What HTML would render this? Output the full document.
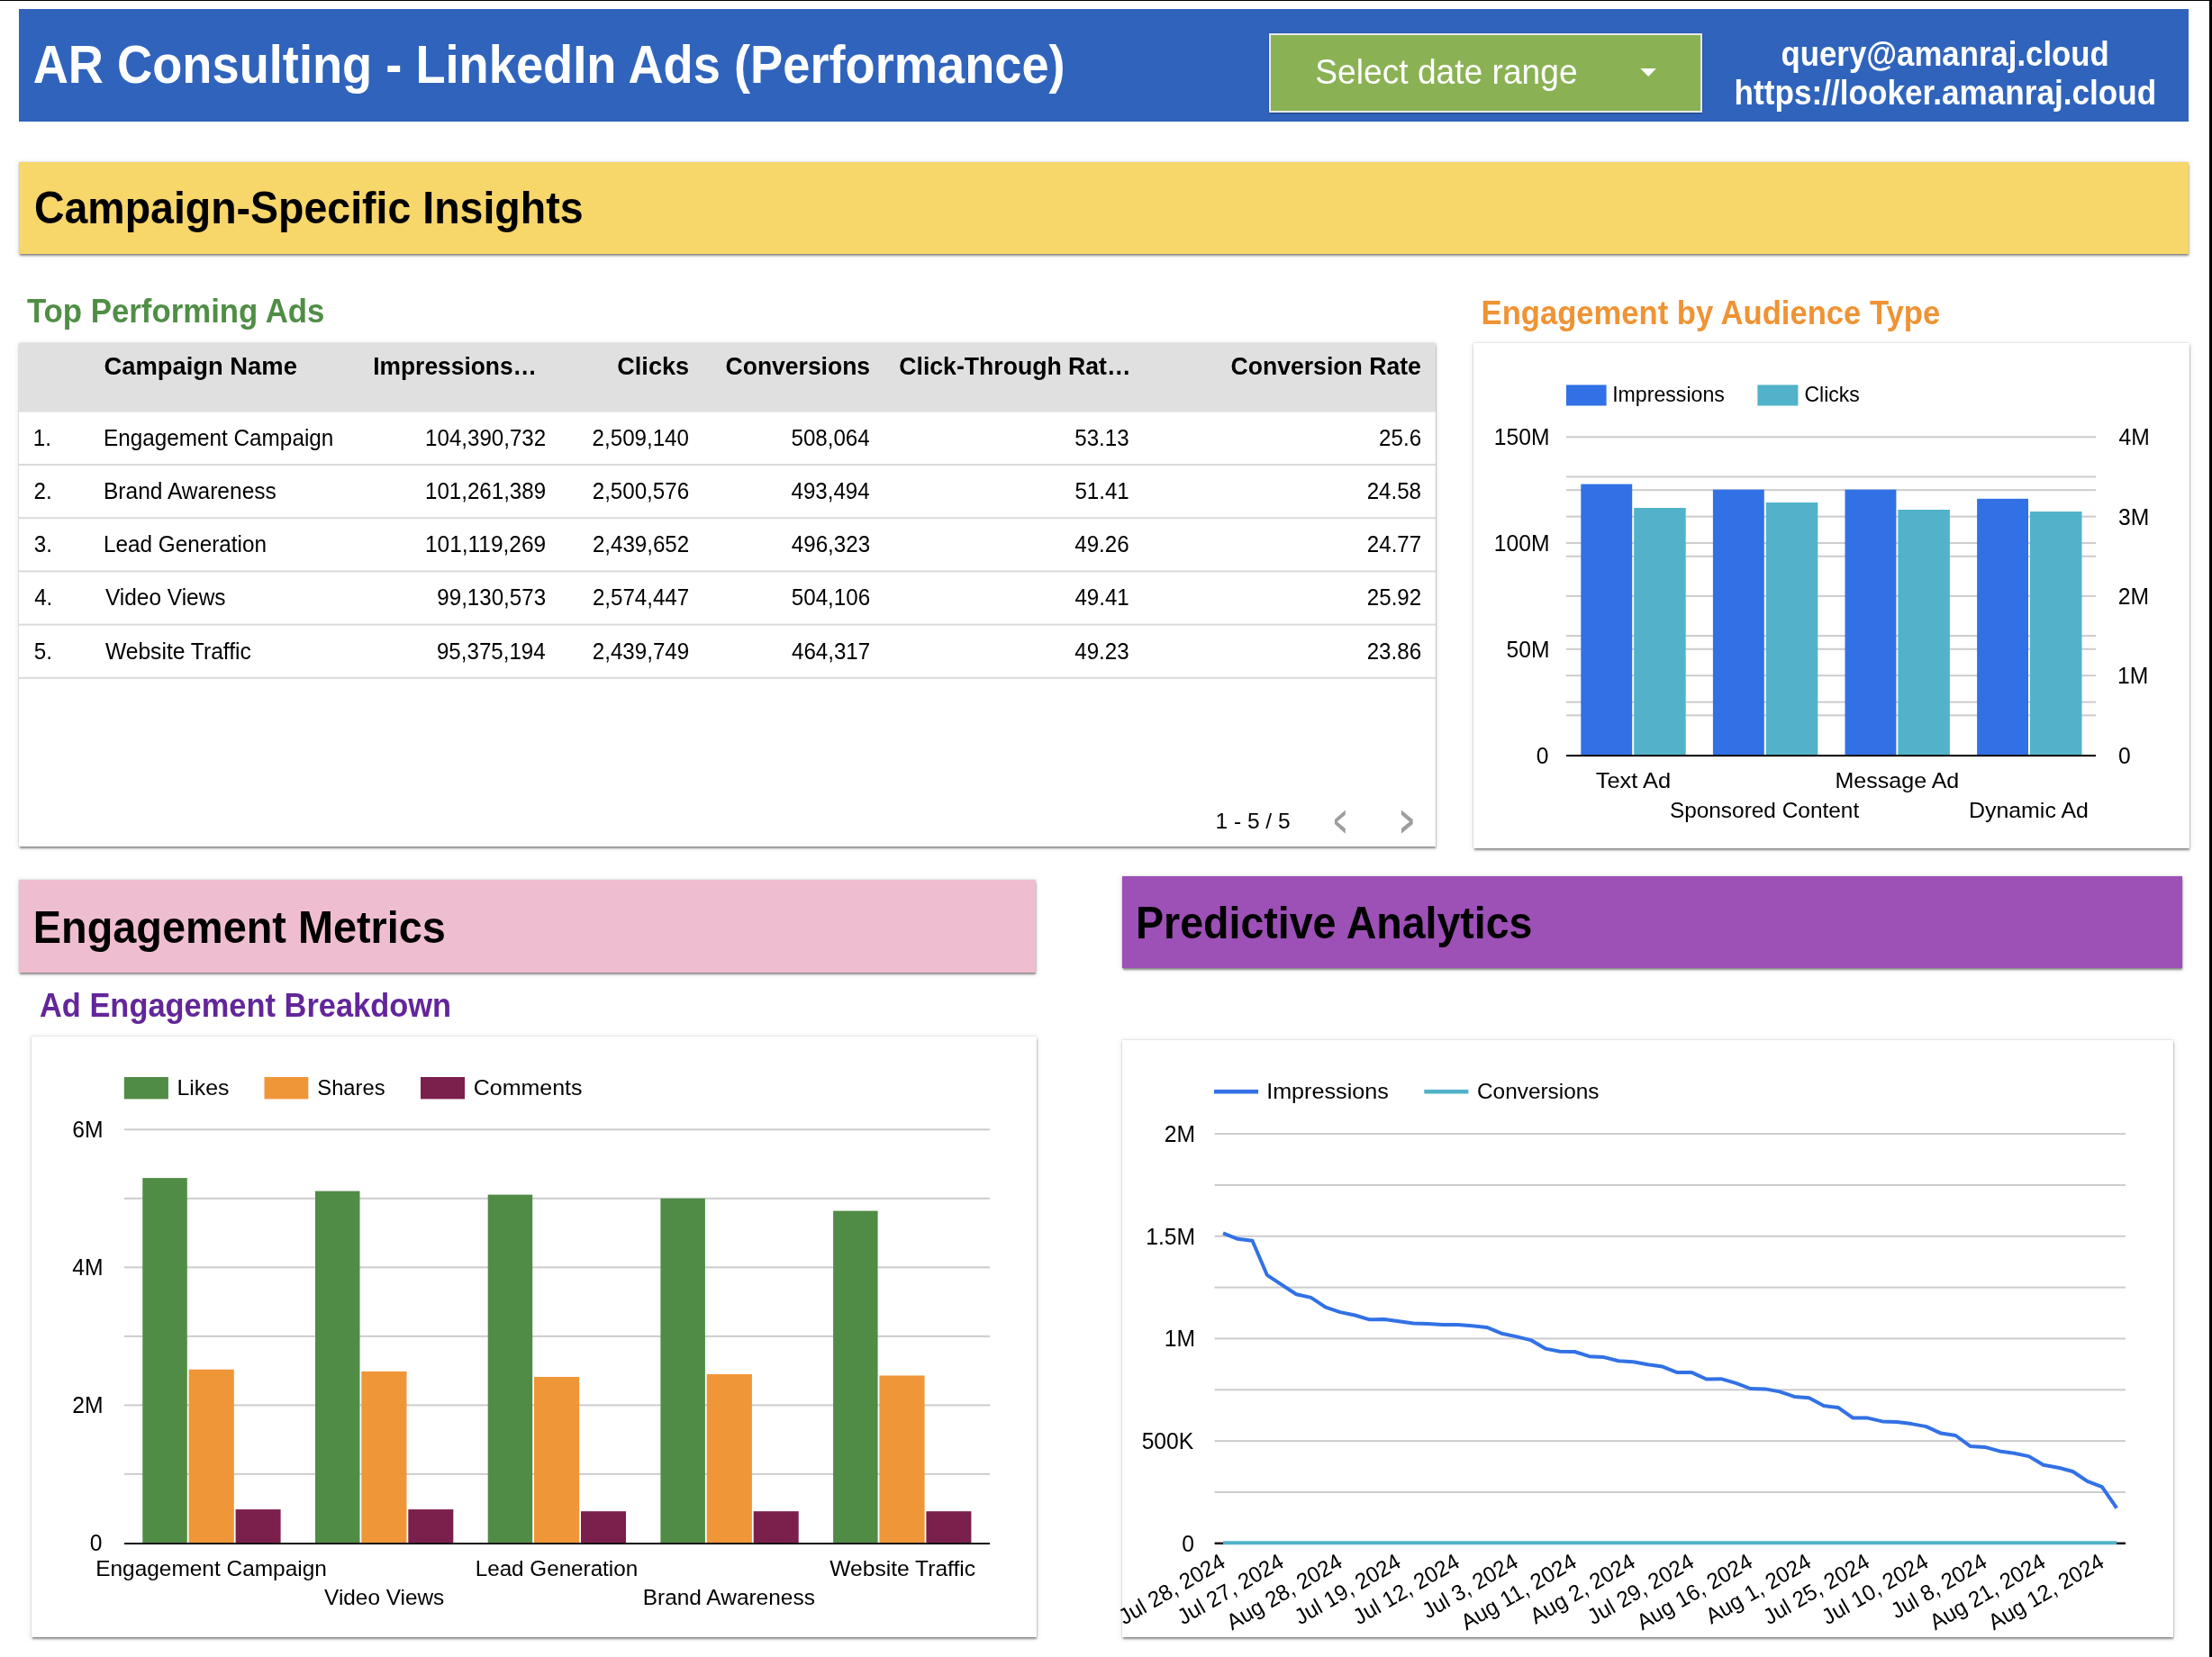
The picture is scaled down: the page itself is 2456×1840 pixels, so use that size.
<!DOCTYPE html>
<html><head><meta charset="utf-8"><title>AR Consulting - LinkedIn Ads (Performance)</title>
<style>
html,body{margin:0;padding:0;background:#fff;}
body{width:2456px;height:1840px;position:relative;overflow:hidden;font-family:"Liberation Sans",sans-serif;}
.b{position:absolute;box-sizing:border-box;}
.sh{box-shadow:0 2px 2px -0.5px rgba(0,0,0,.4),0 1px 6px 1px rgba(0,0,0,.09),0 0 1.5px rgba(0,0,0,.2);}
svg{position:absolute;left:0;top:0;will-change:transform;}
svg text{font-family:"Liberation Sans",sans-serif;}
</style></head><body>
<div class="b" style="left:0;top:0;width:2456px;height:1px;background:#000"></div>
<div class="b" style="left:2453px;top:0;width:3px;height:1840px;background:#000"></div>
<div class="b" style="left:21px;top:10px;width:2409px;height:125px;background:#3064bc"></div>
<div class="b" style="left:1409px;top:36.6px;width:481px;height:88.5px;background:#8ab254;border:2.2px solid #e9e9e9;box-shadow:0 1px 2px rgba(0,0,0,.35)"></div>
<div class="b sh" style="left:21px;top:179.6px;width:2409px;height:102.4px;background:#f7d66a"></div>
<div class="b sh" style="left:21px;top:381px;width:1573px;height:559px;background:#fff"></div>
<div class="b sh" style="left:1636px;top:381.3px;width:795px;height:560.5px;background:#fff"></div>
<div class="b sh" style="left:21px;top:977px;width:1129px;height:102.5px;background:#efbdd0"></div>
<div class="b sh" style="left:1246.3px;top:973.3px;width:1177px;height:102px;background:#9d50b6"></div>
<div class="b sh" style="left:35px;top:1150.5px;width:1116px;height:667.5px;background:#fff"></div>
<div class="b sh" style="left:1246px;top:1154.5px;width:1166.5px;height:663px;background:#fff"></div>
<svg width="2456" height="1840" viewBox="0 0 2456 1840">
<text x="36.65" y="92.20" font-size="59.59" font-weight="bold" fill="#fff" textLength="1146.04" lengthAdjust="spacingAndGlyphs">AR Consulting - LinkedIn Ads (Performance)</text>
<text x="1460.31" y="93.00" font-size="39.24" font-weight="normal" fill="#fff" textLength="291.34" lengthAdjust="spacingAndGlyphs">Select date range</text>
<text x="1977.57" y="72.50" font-size="38.52" font-weight="bold" fill="#fff" textLength="364.22" lengthAdjust="spacingAndGlyphs">query@amanraj.cloud</text>
<text x="1925.56" y="115.70" font-size="38.52" font-weight="bold" fill="#fff" textLength="468.75" lengthAdjust="spacingAndGlyphs">https://looker.amanraj.cloud</text>
<path d="M1821.4 76 L1838.9 76 L1830.15 85 Z" fill="#fff"/>
<text x="37.89" y="247.70" font-size="50.44" font-weight="bold" fill="#000" textLength="609.61" lengthAdjust="spacingAndGlyphs">Campaign-Specific Insights</text>
<text x="36.87" y="1046.80" font-size="50.87" font-weight="bold" fill="#000" textLength="458.05" lengthAdjust="spacingAndGlyphs">Engagement Metrics</text>
<text x="1261.10" y="1042.20" font-size="50.87" font-weight="bold" fill="#000" textLength="440.40" lengthAdjust="spacingAndGlyphs">Predictive Analytics</text>
<text x="29.91" y="358.00" font-size="37.79" font-weight="bold" fill="#508e46" textLength="330.50" lengthAdjust="spacingAndGlyphs">Top Performing Ads</text>
<text x="1644.60" y="360.00" font-size="37.79" font-weight="bold" fill="#ef9334" textLength="509.57" lengthAdjust="spacingAndGlyphs">Engagement by Audience Type</text>
<text x="43.94" y="1128.70" font-size="37.79" font-weight="bold" fill="#63269a" textLength="457.19" lengthAdjust="spacingAndGlyphs">Ad Engagement Breakdown</text>
<rect x="21.00" y="381.00" width="1573.00" height="76.60" fill="#e0e0e0"/>
<text x="115.38" y="415.70" font-size="28.34" font-weight="bold" fill="#000" textLength="214.56" lengthAdjust="spacingAndGlyphs">Campaign Name</text>
<text x="414.24" y="415.70" font-size="28.34" font-weight="bold" fill="#000" textLength="181.75" lengthAdjust="spacingAndGlyphs">Impressions…</text>
<text x="685.29" y="415.70" font-size="28.34" font-weight="bold" fill="#000" textLength="79.82" lengthAdjust="spacingAndGlyphs">Clicks</text>
<text x="805.61" y="415.70" font-size="28.34" font-weight="bold" fill="#000" textLength="160.47" lengthAdjust="spacingAndGlyphs">Conversions</text>
<text x="998.31" y="415.70" font-size="28.34" font-weight="bold" fill="#000" textLength="257.31" lengthAdjust="spacingAndGlyphs">Click-Through Rat…</text>
<text x="1366.41" y="415.70" font-size="28.34" font-weight="bold" fill="#000" textLength="211.50" lengthAdjust="spacingAndGlyphs">Conversion Rate</text>
<text x="36.85" y="494.70" font-size="25.00" font-weight="normal" fill="#000" textLength="20.22" lengthAdjust="spacingAndGlyphs">1.</text>
<text x="115.01" y="494.70" font-size="25.00" font-weight="normal" fill="#000" textLength="255.32" lengthAdjust="spacingAndGlyphs">Engagement Campaign</text>
<text x="472.05" y="494.70" font-size="25.00" font-weight="normal" fill="#000" textLength="134.16" lengthAdjust="spacingAndGlyphs">104,390,732</text>
<text x="657.61" y="494.70" font-size="25.00" font-weight="normal" fill="#000" textLength="107.33" lengthAdjust="spacingAndGlyphs">2,509,140</text>
<text x="878.50" y="494.70" font-size="25.00" font-weight="normal" fill="#000" textLength="87.21" lengthAdjust="spacingAndGlyphs">508,064</text>
<text x="1193.29" y="494.70" font-size="25.00" font-weight="normal" fill="#000" textLength="60.37" lengthAdjust="spacingAndGlyphs">53.13</text>
<text x="1531.11" y="494.70" font-size="25.00" font-weight="normal" fill="#000" textLength="46.96" lengthAdjust="spacingAndGlyphs">25.6</text>
<rect x="21.00" y="515.00" width="1573.00" height="2.00" fill="#d9dbdb"/>
<text x="37.48" y="553.90" font-size="25.00" font-weight="normal" fill="#000" textLength="20.22" lengthAdjust="spacingAndGlyphs">2.</text>
<text x="115.01" y="553.90" font-size="25.00" font-weight="normal" fill="#000" textLength="191.80" lengthAdjust="spacingAndGlyphs">Brand Awareness</text>
<text x="471.98" y="553.90" font-size="25.00" font-weight="normal" fill="#000" textLength="134.16" lengthAdjust="spacingAndGlyphs">101,261,389</text>
<text x="657.73" y="553.90" font-size="25.00" font-weight="normal" fill="#000" textLength="107.33" lengthAdjust="spacingAndGlyphs">2,500,576</text>
<text x="878.50" y="553.90" font-size="25.00" font-weight="normal" fill="#000" textLength="87.21" lengthAdjust="spacingAndGlyphs">493,494</text>
<text x="1193.41" y="553.90" font-size="25.00" font-weight="normal" fill="#000" textLength="60.37" lengthAdjust="spacingAndGlyphs">51.41</text>
<text x="1517.68" y="553.90" font-size="25.00" font-weight="normal" fill="#000" textLength="60.37" lengthAdjust="spacingAndGlyphs">24.58</text>
<rect x="21.00" y="574.20" width="1573.00" height="2.00" fill="#d9dbdb"/>
<text x="37.78" y="613.10" font-size="25.00" font-weight="normal" fill="#000" textLength="20.22" lengthAdjust="spacingAndGlyphs">3.</text>
<text x="115.01" y="613.10" font-size="25.00" font-weight="normal" fill="#000" textLength="181.04" lengthAdjust="spacingAndGlyphs">Lead Generation</text>
<text x="471.98" y="613.10" font-size="25.00" font-weight="normal" fill="#000" textLength="134.16" lengthAdjust="spacingAndGlyphs">101,119,269</text>
<text x="657.89" y="613.10" font-size="25.00" font-weight="normal" fill="#000" textLength="107.33" lengthAdjust="spacingAndGlyphs">2,439,652</text>
<text x="878.85" y="613.10" font-size="25.00" font-weight="normal" fill="#000" textLength="87.21" lengthAdjust="spacingAndGlyphs">496,323</text>
<text x="1193.29" y="613.10" font-size="25.00" font-weight="normal" fill="#000" textLength="60.37" lengthAdjust="spacingAndGlyphs">49.26</text>
<text x="1517.84" y="613.10" font-size="25.00" font-weight="normal" fill="#000" textLength="60.37" lengthAdjust="spacingAndGlyphs">24.77</text>
<rect x="21.00" y="633.40" width="1573.00" height="2.00" fill="#d9dbdb"/>
<text x="38.14" y="672.30" font-size="25.00" font-weight="normal" fill="#000" textLength="20.22" lengthAdjust="spacingAndGlyphs">4.</text>
<text x="116.89" y="672.30" font-size="25.00" font-weight="normal" fill="#000" textLength="133.72" lengthAdjust="spacingAndGlyphs">Video Views</text>
<text x="485.32" y="672.30" font-size="25.00" font-weight="normal" fill="#000" textLength="120.74" lengthAdjust="spacingAndGlyphs">99,130,573</text>
<text x="657.89" y="672.30" font-size="25.00" font-weight="normal" fill="#000" textLength="107.33" lengthAdjust="spacingAndGlyphs">2,574,447</text>
<text x="878.85" y="672.30" font-size="25.00" font-weight="normal" fill="#000" textLength="87.21" lengthAdjust="spacingAndGlyphs">504,106</text>
<text x="1193.41" y="672.30" font-size="25.00" font-weight="normal" fill="#000" textLength="60.37" lengthAdjust="spacingAndGlyphs">49.41</text>
<text x="1517.84" y="672.30" font-size="25.00" font-weight="normal" fill="#000" textLength="60.37" lengthAdjust="spacingAndGlyphs">25.92</text>
<rect x="21.00" y="692.60" width="1573.00" height="2.00" fill="#d9dbdb"/>
<text x="37.73" y="731.50" font-size="25.00" font-weight="normal" fill="#000" textLength="20.22" lengthAdjust="spacingAndGlyphs">5.</text>
<text x="116.89" y="731.50" font-size="25.00" font-weight="normal" fill="#000" textLength="162.03" lengthAdjust="spacingAndGlyphs">Website Traffic</text>
<text x="484.96" y="731.50" font-size="25.00" font-weight="normal" fill="#000" textLength="120.74" lengthAdjust="spacingAndGlyphs">95,375,194</text>
<text x="657.82" y="731.50" font-size="25.00" font-weight="normal" fill="#000" textLength="107.33" lengthAdjust="spacingAndGlyphs">2,439,749</text>
<text x="879.01" y="731.50" font-size="25.00" font-weight="normal" fill="#000" textLength="87.21" lengthAdjust="spacingAndGlyphs">464,317</text>
<text x="1193.29" y="731.50" font-size="25.00" font-weight="normal" fill="#000" textLength="60.37" lengthAdjust="spacingAndGlyphs">49.23</text>
<text x="1517.69" y="731.50" font-size="25.00" font-weight="normal" fill="#000" textLength="60.37" lengthAdjust="spacingAndGlyphs">23.86</text>
<rect x="21.00" y="751.80" width="1573.00" height="2.00" fill="#d9dbdb"/>
<text x="1349.53" y="919.60" font-size="24.71" font-weight="normal" fill="#000" textLength="83.10" lengthAdjust="spacingAndGlyphs">1 - 5 / 5</text>
<path d="M1493.8 899.4 L1481.9 910.1 L1481.9 914.9 L1493.8 925.8 L1493.8 920.1 L1484.7 912.5 L1493.8 904.7 Z" fill="#9e9e9e"/>
<path d="M1555.9 899.4 L1568.7 910.1 L1568.7 914.9 L1555.9 925.8 L1555.9 920.1 L1565 912.5 L1555.9 904.7 Z" fill="#9e9e9e"/>
<rect x="1739.00" y="427.40" width="44.60" height="23.10" fill="#3271e5"/>
<text x="1790.17" y="446.00" font-size="24.71" font-weight="normal" fill="#000" textLength="124.67" lengthAdjust="spacingAndGlyphs">Impressions</text>
<rect x="1951.40" y="427.40" width="45.00" height="23.10" fill="#52b2c9"/>
<text x="2003.53" y="446.00" font-size="24.71" font-weight="normal" fill="#000" textLength="61.30" lengthAdjust="spacingAndGlyphs">Clicks</text>
<rect x="1739.00" y="484.30" width="588.00" height="2.00" fill="#cccccc"/>
<rect x="1739.00" y="528.45" width="588.00" height="2.00" fill="#cccccc"/>
<rect x="1739.00" y="543.17" width="588.00" height="2.00" fill="#cccccc"/>
<rect x="1739.00" y="572.60" width="588.00" height="2.00" fill="#cccccc"/>
<rect x="1739.00" y="602.03" width="588.00" height="2.00" fill="#cccccc"/>
<rect x="1739.00" y="616.75" width="588.00" height="2.00" fill="#cccccc"/>
<rect x="1739.00" y="660.90" width="588.00" height="2.00" fill="#cccccc"/>
<rect x="1739.00" y="705.05" width="588.00" height="2.00" fill="#cccccc"/>
<rect x="1739.00" y="719.77" width="588.00" height="2.00" fill="#cccccc"/>
<rect x="1739.00" y="749.20" width="588.00" height="2.00" fill="#cccccc"/>
<rect x="1739.00" y="778.63" width="588.00" height="2.00" fill="#cccccc"/>
<rect x="1739.00" y="793.35" width="588.00" height="2.00" fill="#cccccc"/>
<rect x="1755.30" y="537.57" width="56.90" height="300.93" fill="#3271e5"/>
<rect x="1814.20" y="563.98" width="57.50" height="274.52" fill="#52b2c9"/>
<rect x="1901.90" y="543.70" width="56.90" height="294.80" fill="#3271e5"/>
<rect x="1960.80" y="557.97" width="57.50" height="280.53" fill="#52b2c9"/>
<rect x="2048.50" y="543.70" width="56.90" height="294.80" fill="#3271e5"/>
<rect x="2107.40" y="566.01" width="57.50" height="272.49" fill="#52b2c9"/>
<rect x="2195.10" y="553.82" width="56.90" height="284.68" fill="#3271e5"/>
<rect x="2254.00" y="568.04" width="57.50" height="270.46" fill="#52b2c9"/>
<rect x="1739.00" y="838.10" width="588.00" height="2.00" fill="#000"/>
<text x="1658.80" y="494.30" font-size="25.44" font-weight="normal" fill="#000" textLength="61.72" lengthAdjust="spacingAndGlyphs">150M</text>
<text x="1658.80" y="612.03" font-size="25.44" font-weight="normal" fill="#000" textLength="61.72" lengthAdjust="spacingAndGlyphs">100M</text>
<text x="1672.53" y="729.77" font-size="25.44" font-weight="normal" fill="#000" textLength="48.00" lengthAdjust="spacingAndGlyphs">50M</text>
<text x="1705.74" y="847.50" font-size="25.44" font-weight="normal" fill="#000" textLength="13.72" lengthAdjust="spacingAndGlyphs">0</text>
<text x="2352.43" y="494.30" font-size="25.44" font-weight="normal" fill="#000" textLength="34.28" lengthAdjust="spacingAndGlyphs">4M</text>
<text x="2352.06" y="582.60" font-size="25.44" font-weight="normal" fill="#000" textLength="34.28" lengthAdjust="spacingAndGlyphs">3M</text>
<text x="2351.76" y="670.90" font-size="25.44" font-weight="normal" fill="#000" textLength="34.28" lengthAdjust="spacingAndGlyphs">2M</text>
<text x="2351.12" y="759.20" font-size="25.44" font-weight="normal" fill="#000" textLength="34.28" lengthAdjust="spacingAndGlyphs">1M</text>
<text x="2352.04" y="847.50" font-size="25.44" font-weight="normal" fill="#000" textLength="13.72" lengthAdjust="spacingAndGlyphs">0</text>
<text x="1771.76" y="874.80" font-size="24.71" font-weight="normal" fill="#000" textLength="83.40" lengthAdjust="spacingAndGlyphs">Text Ad</text>
<text x="2037.47" y="874.80" font-size="24.71" font-weight="normal" fill="#000" textLength="137.83" lengthAdjust="spacingAndGlyphs">Message Ad</text>
<text x="1853.89" y="907.70" font-size="24.71" font-weight="normal" fill="#000" textLength="210.29" lengthAdjust="spacingAndGlyphs">Sponsored Content</text>
<text x="2185.98" y="907.70" font-size="24.71" font-weight="normal" fill="#000" textLength="132.91" lengthAdjust="spacingAndGlyphs">Dynamic Ad</text>
<rect x="137.80" y="1196.00" width="49.10" height="24.40" fill="#508c45"/>
<text x="196.46" y="1216.30" font-size="24.71" font-weight="normal" fill="#000" textLength="58.04" lengthAdjust="spacingAndGlyphs">Likes</text>
<rect x="293.50" y="1196.00" width="48.80" height="24.40" fill="#ef9638"/>
<text x="352.32" y="1216.30" font-size="24.71" font-weight="normal" fill="#000" textLength="75.24" lengthAdjust="spacingAndGlyphs">Shares</text>
<rect x="467.00" y="1196.00" width="49.00" height="24.40" fill="#7b1f4c"/>
<text x="525.73" y="1216.30" font-size="24.71" font-weight="normal" fill="#000" textLength="120.77" lengthAdjust="spacingAndGlyphs">Comments</text>
<rect x="138.00" y="1253.30" width="961.00" height="2.00" fill="#cccccc"/>
<rect x="138.00" y="1329.82" width="961.00" height="2.00" fill="#cccccc"/>
<rect x="138.00" y="1406.33" width="961.00" height="2.00" fill="#cccccc"/>
<rect x="138.00" y="1482.85" width="961.00" height="2.00" fill="#cccccc"/>
<rect x="138.00" y="1559.37" width="961.00" height="2.00" fill="#cccccc"/>
<rect x="138.00" y="1635.88" width="961.00" height="2.00" fill="#cccccc"/>
<rect x="158.30" y="1308.09" width="49.50" height="405.31" fill="#508c45"/>
<rect x="209.60" y="1520.73" width="50.20" height="192.67" fill="#ef9638"/>
<rect x="261.60" y="1676.09" width="50.00" height="37.31" fill="#7b1f4c"/>
<rect x="350.00" y="1322.63" width="49.50" height="390.77" fill="#508c45"/>
<rect x="401.30" y="1522.87" width="50.20" height="190.53" fill="#ef9638"/>
<rect x="453.30" y="1676.09" width="50.00" height="37.31" fill="#7b1f4c"/>
<rect x="541.70" y="1326.61" width="49.50" height="386.79" fill="#508c45"/>
<rect x="593.00" y="1528.99" width="50.20" height="184.41" fill="#ef9638"/>
<rect x="645.00" y="1678.20" width="50.00" height="35.20" fill="#7b1f4c"/>
<rect x="733.40" y="1330.82" width="49.50" height="382.58" fill="#508c45"/>
<rect x="784.70" y="1525.93" width="50.20" height="187.47" fill="#ef9638"/>
<rect x="836.70" y="1678.20" width="50.00" height="35.20" fill="#7b1f4c"/>
<rect x="925.10" y="1344.59" width="49.50" height="368.81" fill="#508c45"/>
<rect x="976.40" y="1527.46" width="50.20" height="185.94" fill="#ef9638"/>
<rect x="1028.40" y="1678.20" width="50.00" height="35.20" fill="#7b1f4c"/>
<rect x="138.00" y="1713.10" width="961.00" height="1.90" fill="#000"/>
<text x="80.35" y="1263.30" font-size="25.44" font-weight="normal" fill="#000" textLength="34.28" lengthAdjust="spacingAndGlyphs">6M</text>
<text x="80.35" y="1416.33" font-size="25.44" font-weight="normal" fill="#000" textLength="34.28" lengthAdjust="spacingAndGlyphs">4M</text>
<text x="80.35" y="1569.37" font-size="25.44" font-weight="normal" fill="#000" textLength="34.28" lengthAdjust="spacingAndGlyphs">2M</text>
<text x="99.84" y="1722.40" font-size="25.44" font-weight="normal" fill="#000" textLength="13.72" lengthAdjust="spacingAndGlyphs">0</text>
<text x="106.20" y="1750.30" font-size="24.71" font-weight="normal" fill="#000" textLength="256.69" lengthAdjust="spacingAndGlyphs">Engagement Campaign</text>
<text x="527.71" y="1750.30" font-size="24.71" font-weight="normal" fill="#000" textLength="180.46" lengthAdjust="spacingAndGlyphs">Lead Generation</text>
<text x="921.29" y="1750.30" font-size="24.71" font-weight="normal" fill="#000" textLength="161.85" lengthAdjust="spacingAndGlyphs">Website Traffic</text>
<text x="360.09" y="1782.20" font-size="24.71" font-weight="normal" fill="#000" textLength="133.18" lengthAdjust="spacingAndGlyphs">Video Views</text>
<text x="713.71" y="1782.20" font-size="24.71" font-weight="normal" fill="#000" textLength="191.16" lengthAdjust="spacingAndGlyphs">Brand Awareness</text>
<rect x="1348.00" y="1209.90" width="49.10" height="4.60" fill="#3271e5"/>
<text x="1406.18" y="1220.40" font-size="24.71" font-weight="normal" fill="#000" textLength="135.63" lengthAdjust="spacingAndGlyphs">Impressions</text>
<rect x="1581.30" y="1209.90" width="49.10" height="4.60" fill="#52b2c9"/>
<text x="1639.96" y="1220.40" font-size="24.71" font-weight="normal" fill="#000" textLength="135.62" lengthAdjust="spacingAndGlyphs">Conversions</text>
<rect x="1348.60" y="1258.10" width="1011.40" height="2.00" fill="#cccccc"/>
<rect x="1348.60" y="1314.94" width="1011.40" height="2.00" fill="#cccccc"/>
<rect x="1348.60" y="1371.77" width="1011.40" height="2.00" fill="#cccccc"/>
<rect x="1348.60" y="1428.61" width="1011.40" height="2.00" fill="#cccccc"/>
<rect x="1348.60" y="1485.45" width="1011.40" height="2.00" fill="#cccccc"/>
<rect x="1348.60" y="1542.29" width="1011.40" height="2.00" fill="#cccccc"/>
<rect x="1348.60" y="1599.12" width="1011.40" height="2.00" fill="#cccccc"/>
<rect x="1348.60" y="1655.96" width="1011.40" height="2.00" fill="#cccccc"/>
<rect x="1348.60" y="1712.60" width="1011.40" height="2.40" fill="#000"/>
<text x="1292.75" y="1268.10" font-size="25.44" font-weight="normal" fill="#000" textLength="34.28" lengthAdjust="spacingAndGlyphs">2M</text>
<text x="1272.17" y="1381.77" font-size="25.44" font-weight="normal" fill="#000" textLength="54.85" lengthAdjust="spacingAndGlyphs">1.5M</text>
<text x="1292.75" y="1495.45" font-size="25.44" font-weight="normal" fill="#000" textLength="34.28" lengthAdjust="spacingAndGlyphs">1M</text>
<text x="1267.65" y="1609.12" font-size="25.44" font-weight="normal" fill="#000" textLength="57.62" lengthAdjust="spacingAndGlyphs">500K</text>
<text x="1312.24" y="1722.80" font-size="25.44" font-weight="normal" fill="#000" textLength="13.72" lengthAdjust="spacingAndGlyphs">0</text>
<path d="M1358.00 1369.40 L1374.27 1375.80 L1390.53 1377.80 L1406.80 1415.80 L1423.06 1426.60 L1439.33 1437.20 L1455.59 1440.90 L1471.86 1451.70 L1488.12 1457.10 L1504.39 1460.50 L1520.66 1465.30 L1536.92 1465.00 L1553.19 1467.30 L1569.45 1469.60 L1585.72 1470.00 L1601.98 1471.10 L1618.25 1470.90 L1634.51 1472.30 L1650.78 1473.90 L1667.05 1480.70 L1683.31 1484.10 L1699.58 1488.10 L1715.84 1497.60 L1732.11 1500.80 L1748.37 1501.00 L1764.64 1506.20 L1780.90 1507.10 L1797.17 1511.20 L1813.44 1512.30 L1829.70 1515.30 L1845.97 1517.60 L1862.23 1524.10 L1878.50 1524.10 L1894.76 1531.50 L1911.03 1531.20 L1927.30 1535.90 L1943.56 1542.00 L1959.83 1542.40 L1976.09 1545.40 L1992.36 1550.90 L2008.62 1552.20 L2024.89 1561.00 L2041.15 1563.10 L2057.42 1574.60 L2073.69 1574.60 L2089.95 1578.40 L2106.22 1578.90 L2122.48 1581.10 L2138.75 1584.10 L2155.01 1591.60 L2171.28 1594.00 L2187.54 1605.90 L2203.81 1606.90 L2220.08 1611.40 L2236.34 1613.70 L2252.61 1617.10 L2268.87 1626.70 L2285.14 1629.70 L2301.40 1634.00 L2317.67 1644.90 L2333.93 1651.10 L2350.20 1674.70" fill="none" stroke="#3271e5" stroke-width="4" stroke-linejoin="round"/>
<path d="M1358.00 1713.20 L1374.27 1713.20 L1390.53 1713.20 L1406.80 1713.20 L1423.06 1713.20 L1439.33 1713.20 L1455.59 1713.20 L1471.86 1713.20 L1488.12 1713.20 L1504.39 1713.20 L1520.66 1713.20 L1536.92 1713.20 L1553.19 1713.20 L1569.45 1713.20 L1585.72 1713.20 L1601.98 1713.20 L1618.25 1713.20 L1634.51 1713.20 L1650.78 1713.20 L1667.05 1713.20 L1683.31 1713.20 L1699.58 1713.20 L1715.84 1713.20 L1732.11 1713.20 L1748.37 1713.20 L1764.64 1713.20 L1780.90 1713.20 L1797.17 1713.20 L1813.44 1713.20 L1829.70 1713.20 L1845.97 1713.20 L1862.23 1713.20 L1878.50 1713.20 L1894.76 1713.20 L1911.03 1713.20 L1927.30 1713.20 L1943.56 1713.20 L1959.83 1713.20 L1976.09 1713.20 L1992.36 1713.20 L2008.62 1713.20 L2024.89 1713.20 L2041.15 1713.20 L2057.42 1713.20 L2073.69 1713.20 L2089.95 1713.20 L2106.22 1713.20 L2122.48 1713.20 L2138.75 1713.20 L2155.01 1713.20 L2171.28 1713.20 L2187.54 1713.20 L2203.81 1713.20 L2220.08 1713.20 L2236.34 1713.20 L2252.61 1713.20 L2268.87 1713.20 L2285.14 1713.20 L2301.40 1713.20 L2317.67 1713.20 L2333.93 1713.20 L2350.20 1713.20" fill="none" stroke="#52b2c9" stroke-width="4" stroke-linejoin="round"/>
<g transform="translate(1362.00 1739.00) rotate(-30)"><text x="-131.27" y="0" font-size="24.71" fill="#000" textLength="131.27" lengthAdjust="spacingAndGlyphs">Jul 28, 2024</text></g>
<g transform="translate(1427.06 1739.00) rotate(-30)"><text x="-131.27" y="0" font-size="24.71" fill="#000" textLength="131.27" lengthAdjust="spacingAndGlyphs">Jul 27, 2024</text></g>
<g transform="translate(1492.12 1739.00) rotate(-30)"><text x="-143.34" y="0" font-size="24.71" fill="#000" textLength="143.34" lengthAdjust="spacingAndGlyphs">Aug 28, 2024</text></g>
<g transform="translate(1557.19 1739.00) rotate(-30)"><text x="-131.27" y="0" font-size="24.71" fill="#000" textLength="131.27" lengthAdjust="spacingAndGlyphs">Jul 19, 2024</text></g>
<g transform="translate(1622.25 1739.00) rotate(-30)"><text x="-131.27" y="0" font-size="24.71" fill="#000" textLength="131.27" lengthAdjust="spacingAndGlyphs">Jul 12, 2024</text></g>
<g transform="translate(1687.31 1739.00) rotate(-30)"><text x="-117.87" y="0" font-size="24.71" fill="#000" textLength="117.87" lengthAdjust="spacingAndGlyphs">Jul 3, 2024</text></g>
<g transform="translate(1752.37 1739.00) rotate(-30)"><text x="-143.34" y="0" font-size="24.71" fill="#000" textLength="143.34" lengthAdjust="spacingAndGlyphs">Aug 11, 2024</text></g>
<g transform="translate(1817.44 1739.00) rotate(-30)"><text x="-129.94" y="0" font-size="24.71" fill="#000" textLength="129.94" lengthAdjust="spacingAndGlyphs">Aug 2, 2024</text></g>
<g transform="translate(1882.50 1739.00) rotate(-30)"><text x="-131.27" y="0" font-size="24.71" fill="#000" textLength="131.27" lengthAdjust="spacingAndGlyphs">Jul 29, 2024</text></g>
<g transform="translate(1947.56 1739.00) rotate(-30)"><text x="-143.34" y="0" font-size="24.71" fill="#000" textLength="143.34" lengthAdjust="spacingAndGlyphs">Aug 16, 2024</text></g>
<g transform="translate(2012.62 1739.00) rotate(-30)"><text x="-129.94" y="0" font-size="24.71" fill="#000" textLength="129.94" lengthAdjust="spacingAndGlyphs">Aug 1, 2024</text></g>
<g transform="translate(2077.69 1739.00) rotate(-30)"><text x="-131.27" y="0" font-size="24.71" fill="#000" textLength="131.27" lengthAdjust="spacingAndGlyphs">Jul 25, 2024</text></g>
<g transform="translate(2142.75 1739.00) rotate(-30)"><text x="-131.27" y="0" font-size="24.71" fill="#000" textLength="131.27" lengthAdjust="spacingAndGlyphs">Jul 10, 2024</text></g>
<g transform="translate(2207.81 1739.00) rotate(-30)"><text x="-117.87" y="0" font-size="24.71" fill="#000" textLength="117.87" lengthAdjust="spacingAndGlyphs">Jul 8, 2024</text></g>
<g transform="translate(2272.87 1739.00) rotate(-30)"><text x="-143.34" y="0" font-size="24.71" fill="#000" textLength="143.34" lengthAdjust="spacingAndGlyphs">Aug 21, 2024</text></g>
<g transform="translate(2337.93 1739.00) rotate(-30)"><text x="-143.34" y="0" font-size="24.71" fill="#000" textLength="143.34" lengthAdjust="spacingAndGlyphs">Aug 12, 2024</text></g>
</svg>
</body></html>
